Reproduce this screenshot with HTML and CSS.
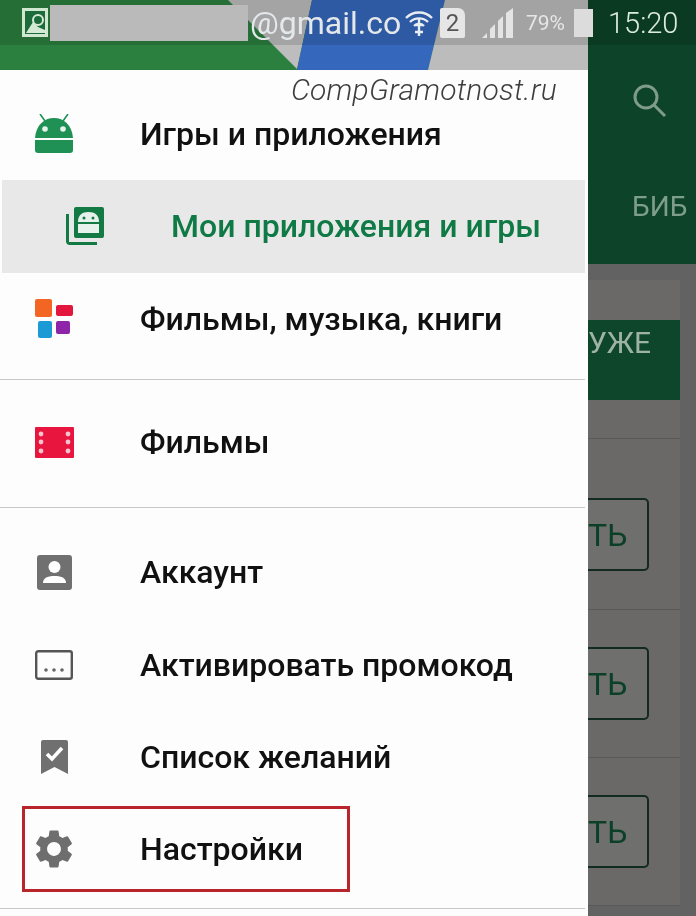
FILE: index.html
```html
<!DOCTYPE html>
<html lang="en">
<head>
  <meta charset="utf-8">
  <title>Мои приложения и игры</title>
  <link rel="stylesheet" href="styles.css">
</head>
<body>
  <div class="screen">
    <div class="status">
      <svg class="status-pic" viewBox="0 0 26 29">
        <rect width="26" height="29" fill="#cfe8cf"/>
        <rect x="3" y="3" width="20" height="23" fill="#1c6b3a"/>
        <path d="M4 25 L11 14 L16 19 L23 22 V25Z" fill="#d5ead5"/>
        <circle cx="16" cy="12" r="5" fill="none" stroke="#d5ead5" stroke-width="2"/>
      </svg>
      <div class="status-mask"></div>
      <span class="status-mail">@gmail.co</span>
      <svg class="status-wifi" viewBox="0 0 28 33" fill="none" stroke="#e8eef2" stroke-width="2.4">
        <path d="M1 12 A18 18 0 0 1 27 12"/>
        <path d="M5 16 A13 13 0 0 1 23 16"/>
        <path d="M9 20 A7 7 0 0 1 19 20"/>
        <path d="M14 12 V30 M10 26 H18 M11 19 H17"/>
      </svg>
      <div class="status-sim">2</div>
      <svg class="status-signal" viewBox="0 0 31 30" fill="#e4e4e4">
        <path d="M0 30 L5 25 V30Z"/>
        <path d="M8 30 V21 L13 16 V30Z"/>
        <path d="M16 30 V13 L21 8 V30Z"/>
        <path d="M24 30 V5 L31 0 V30Z"/>
      </svg>
      <span class="status-pct">79%</span>
      <div class="status-batt"></div>
      <span class="status-time">15:20</span>
    </div>

    <div class="drawer">
      <svg class="drawer-head" viewBox="0 0 588 70" preserveAspectRatio="none">
        <rect width="588" height="70" fill="#2b7f3f"/>
        <path d="M228 0 H312 L297 69Z" fill="#bdbdbd"/>
        <path d="M312 0 H445 L428 70 H297Z" fill="#3568bd"/>
        <path d="M445 0 H588 V70 H428Z" fill="#bcbcbc"/>
      </svg>

      <div class="mark">CompGramotnost.ru</div>

      <div class="group group-first">
        <div class="item">
          <div class="item-icon">
            <svg width="38" height="40" viewBox="0 0 38 40">
              <path d="M5 0 L10 7 M33 0 L28 7" stroke="#1f9155" stroke-width="1.6"/>
              <path d="M0 24 C1 11 9 4 19 4 C29 4 37 11 38 24Z" fill="#1f9155"/>
              <circle cx="10" cy="15" r="2.8" fill="#e6f3ec"/>
              <circle cx="28" cy="15" r="2.8" fill="#e6f3ec"/>
              <path d="M0 26 H38 V36 A3 3 0 0 1 35 39 H3 A3 3 0 0 1 0 36Z" fill="#1f9155"/>
            </svg>
          </div>
          <span>Игры и приложения</span>
        </div>
        <div class="item item-active">
          <div class="item-icon">
            <svg width="38" height="38" viewBox="0 0 38 38">
              <path d="M1.500 7 V35 A2 2 0 0 0 3.500 36.500 H31" fill="none" stroke="#137a44" stroke-width="3"/>
              <rect x="8" width="30" height="31" rx="2" fill="#137a44"/>
              <path d="M12 15 C12 8 16 5 22.500 5 C29 5 33 8 33 15Z" fill="#e8f2ec"/>
              <path d="M12 17 H33 V26 H12Z" fill="#e8f2ec"/>
              <circle cx="18" cy="11" r="1.500" fill="#137a44"/>
              <circle cx="27" cy="11" r="1.500" fill="#137a44"/>
            </svg>
          </div>
          <span>Мои приложения и игры</span>
        </div>
        <div class="item">
          <div class="item-icon">
            <svg width="38" height="39" viewBox="0 0 38 39">
              <rect width="17" height="18" rx="2" fill="#f26522"/>
              <rect x="21" y="6" width="17" height="11" rx="2" fill="#e3173e"/>
              <rect x="3" y="22" width="14" height="17" rx="2" fill="#1b9ad6"/>
              <rect x="21" y="22" width="14" height="13" rx="2" fill="#8e24aa"/>
            </svg>
          </div>
          <span>Фильмы, музыка, книги</span>
        </div>
      </div>

      <div class="group group-second">
        <div class="item">
          <div class="item-icon">
            <svg width="39" height="31" viewBox="0 0 39 31">
              <rect width="39" height="31" rx="1" fill="#e8163f"/>
              <g fill="#f6c3cf">
                <circle cx="6" cy="7" r="2.400"/><circle cx="6" cy="15" r="2.400"/><circle cx="6" cy="24" r="2.400"/>
                <circle cx="33" cy="7" r="2.400"/><circle cx="33" cy="15" r="2.400"/><circle cx="33" cy="24" r="2.400"/>
              </g>
            </svg>
          </div>
          <span>Фильмы</span>
        </div>
      </div>

      <div class="group group-third">
        <div class="item">
          <div class="item-icon">
            <svg width="35" height="35" viewBox="0 0 35 35">
              <rect width="35" height="35" rx="3" fill="#707070"/>
              <circle cx="17.500" cy="12" r="6" fill="#fff"/>
              <path d="M6 28 C6 22 12 21 17.500 21 C23 21 29 22 29 28Z" fill="#fff"/>
            </svg>
          </div>
          <span>Аккаунт</span>
        </div>
        <div class="item">
          <div class="item-icon">
            <svg width="38" height="30" viewBox="0 0 38 30">
              <rect x="1.200" y="1.200" width="35.600" height="27.600" rx="2" fill="none" stroke="#555" stroke-width="2.4"/>
              <circle cx="11" cy="20" r="1.800" fill="#666"/>
              <circle cx="19" cy="20" r="1.800" fill="#666"/>
              <circle cx="27" cy="20" r="1.800" fill="#666"/>
            </svg>
          </div>
          <span>Активировать промокод</span>
        </div>
        <div class="item">
          <div class="item-icon">
            <svg width="27" height="34" viewBox="0 0 27 34">
              <path d="M2 0 H25 A2 2 0 0 1 27 2 V34 L13.500 27 L0 34 V2 A2 2 0 0 1 2 0Z" fill="#707070"/>
              <path d="M6 14 L11 19 L21 8" fill="none" stroke="#fff" stroke-width="3.600"/>
            </svg>
          </div>
          <span>Список желаний</span>
        </div>
        <div class="item">
          <div class="item-icon">
            <svg width="46" height="46" viewBox="0 0 24 24">
              <path fill="#6e6e6e" d="M19.14 12.94c.04-.3.06-.61.06-.94 0-.32-.02-.64-.07-.94l2.03-1.58a.49.49 0 0 0 .12-.61l-1.92-3.32a.488.488 0 0 0-.59-.22l-2.39.96c-.5-.38-1.03-.7-1.62-.94l-.36-2.54a.484.484 0 0 0-.48-.41h-3.84c-.24 0-.43.17-.47.41l-.36 2.54c-.59.24-1.13.57-1.62.94l-2.39-.96c-.22-.08-.47 0-.59.22L2.74 8.87c-.12.21-.08.47.12.61l2.03 1.58c-.05.3-.09.63-.09.94s.02.64.07.94l-2.03 1.58a.49.49 0 0 0-.12.61l1.92 3.32c.12.22.37.29.59.22l2.39-.96c.5.38 1.03.7 1.62.94l.36 2.54c.05.24.24.41.48.41h3.84c.24 0 .44-.17.47-.41l.36-2.54c.59-.24 1.13-.56 1.62-.94l2.39.96c.22.08.47 0 .59-.22l1.92-3.32c.12-.22.07-.47-.12-.61l-2.01-1.58zM12 15.6c-1.98 0-3.6-1.62-3.6-3.6s1.62-3.6 3.6-3.6 3.6 1.62 3.6 3.6-1.62 3.6-3.6 3.6z"/>
            </svg>
          </div>
          <span>Настройки</span>
          <div class="callout"></div>
        </div>
      </div>
    </div>

    <div class="behind">
      <div class="appbar">
        <svg class="appbar-search" width="34" height="36" viewBox="0 0 34 36" fill="none" stroke="#7f9b8b" stroke-width="3">
          <circle cx="13" cy="14" r="11"/>
          <path d="M21 22 L32 33"/>
        </svg>
        <div class="appbar-tab">БИБ</div>
      </div>
      <div class="list">
        <div class="promo">УЖЕ</div>
        <div class="app-row app-row-first"><div class="app-btn">ТЬ</div></div>
        <div class="app-row"><div class="app-btn">ТЬ</div></div>
        <div class="app-row"><div class="app-btn">ТЬ</div></div>
      </div>
    </div>
  </div>
</body>
</html>
```

FILE: styles.css
```css
body {
  margin: 0;
  font-family: Roboto, "Liberation Sans", sans-serif;
  background-color: #626262;
}

.screen {
  position: relative;
  display: flex;
  width: 696px;
  height: 916px;
  overflow: hidden;
  filter: blur(0.5px);
}

/* status bar sits over the drawer header and the app bar */
.status {
  position: absolute;
  top: 0;
  left: 0;
  z-index: 3;
  display: flex;
  align-items: center;
  box-sizing: border-box;
  width: 696px;
  height: 45px;
  padding-left: 22px;
  background-color: rgba(0, 0, 0, 0.13);
}

.status-pic {
  width: 26px;
  height: 29px;
  margin-right: 2px;
}

.status-mask {
  width: 198px;
  height: 36px;
  margin-right: 2px;
  background-color: #bababa;
}

.status-mail {
  width: 155px;
  font-size: 32px;
  color: #e4e8ea;
  white-space: nowrap;
}

.status-wifi {
  width: 28px;
  height: 33px;
}

.status-sim {
  width: 25px;
  height: 30px;
  margin-left: 7px;
  font-size: 24px;
  line-height: 30px;
  text-align: center;
  color: #555;
  background-color: #e6e6e6;
  border-radius: 2px 7px 2px 2px;
}

.status-signal {
  width: 31px;
  height: 30px;
  margin-left: 17px;
}

.status-pct {
  width: 48px;
  margin-left: 13px;
  font-size: 21px;
  color: #e6e6e6;
}

.status-batt {
  width: 19px;
  height: 28px;
  background-color: #dcdcdc;
}

.status-time {
  margin-left: 15px;
  font-size: 29px;
  font-weight: 300;
  color: #dcebe0;
}

.drawer {
  position: relative;
  z-index: 2;
  flex: 0 0 588px;
  background-color: #fdfdfd;
}

.drawer-head {
  display: block;
  width: 588px;
  height: 70px;
}

.mark {
  position: absolute;
  top: 72px;
  left: 291px;
  font-size: 30px;
  font-style: italic;
  font-weight: 300;
  letter-spacing: 0.2px;
  color: #3d3d3d;
  white-space: nowrap;
}

.group {
  margin-right: 3px;
  border-bottom: 1px solid #c8c8c8;
}

.group-first {
  padding: 18px 0 14px;
}

.group-second {
  padding: 16px 0 19px;
}

.group-third {
  padding: 18px 0 13px;
}

.item {
  position: relative;
  display: flex;
  align-items: center;
  gap: 67px;
  height: 92.3px;
  padding-left: 35px;
  font-size: 32px;
  font-weight: 500;
  color: #111;
  white-space: nowrap;
}

.item-active {
  margin-left: 2px;
  padding-left: 64px;
  color: #0f7a45;
  background-color: #e8e8e8;
}

.item-icon {
  display: flex;
  align-items: center;
  justify-content: center;
  width: 38px;
  height: 44px;
}

.item-icon svg {
  flex-shrink: 0;
}

.callout {
  position: absolute;
  top: 3px;
  left: 22px;
  box-sizing: border-box;
  width: 328px;
  height: 86px;
  border: 3px solid #b8262c;
}

.behind {
  flex: 1;
  min-width: 0;
  background-color: #626262;
}

.appbar {
  position: relative;
  height: 264px;
  background-color: #0d4329;
}

.appbar-search {
  position: absolute;
  top: 83px;
  left: 45px;
}

.appbar-tab {
  position: absolute;
  top: 190px;
  left: 44px;
  font-size: 28px;
  color: #7f9d8b;
  white-space: nowrap;
}

.list {
  margin: 16px 16px 0 0;
  padding-top: 40px;
  background-color: #6a6968;
}

.promo {
  height: 80px;
  font-size: 30px;
  line-height: 46px;
  color: #9fb3a5;
  background-color: #0d462b;
}

.app-row {
  display: flex;
  justify-content: flex-end;
  align-items: flex-start;
  box-sizing: border-box;
  height: 148px;
  padding: 37px 31px 0 0;
  border-bottom: 1px solid #5a5958;
}

.app-row-first {
  height: 172px;
  margin-top: 38px;
  padding-top: 59px;
  border-top: 1px solid #5a5958;
}

.app-btn {
  box-sizing: border-box;
  width: 61px;
  height: 73px;
  padding-right: 23px;
  font-size: 32px;
  line-height: 71px;
  text-align: right;
  color: #0b3f27;
  background-color: #6f6f6e;
  border: 2px solid #122a20;
  border-left: 0;
  border-radius: 0 5px 5px 0;
}
```
